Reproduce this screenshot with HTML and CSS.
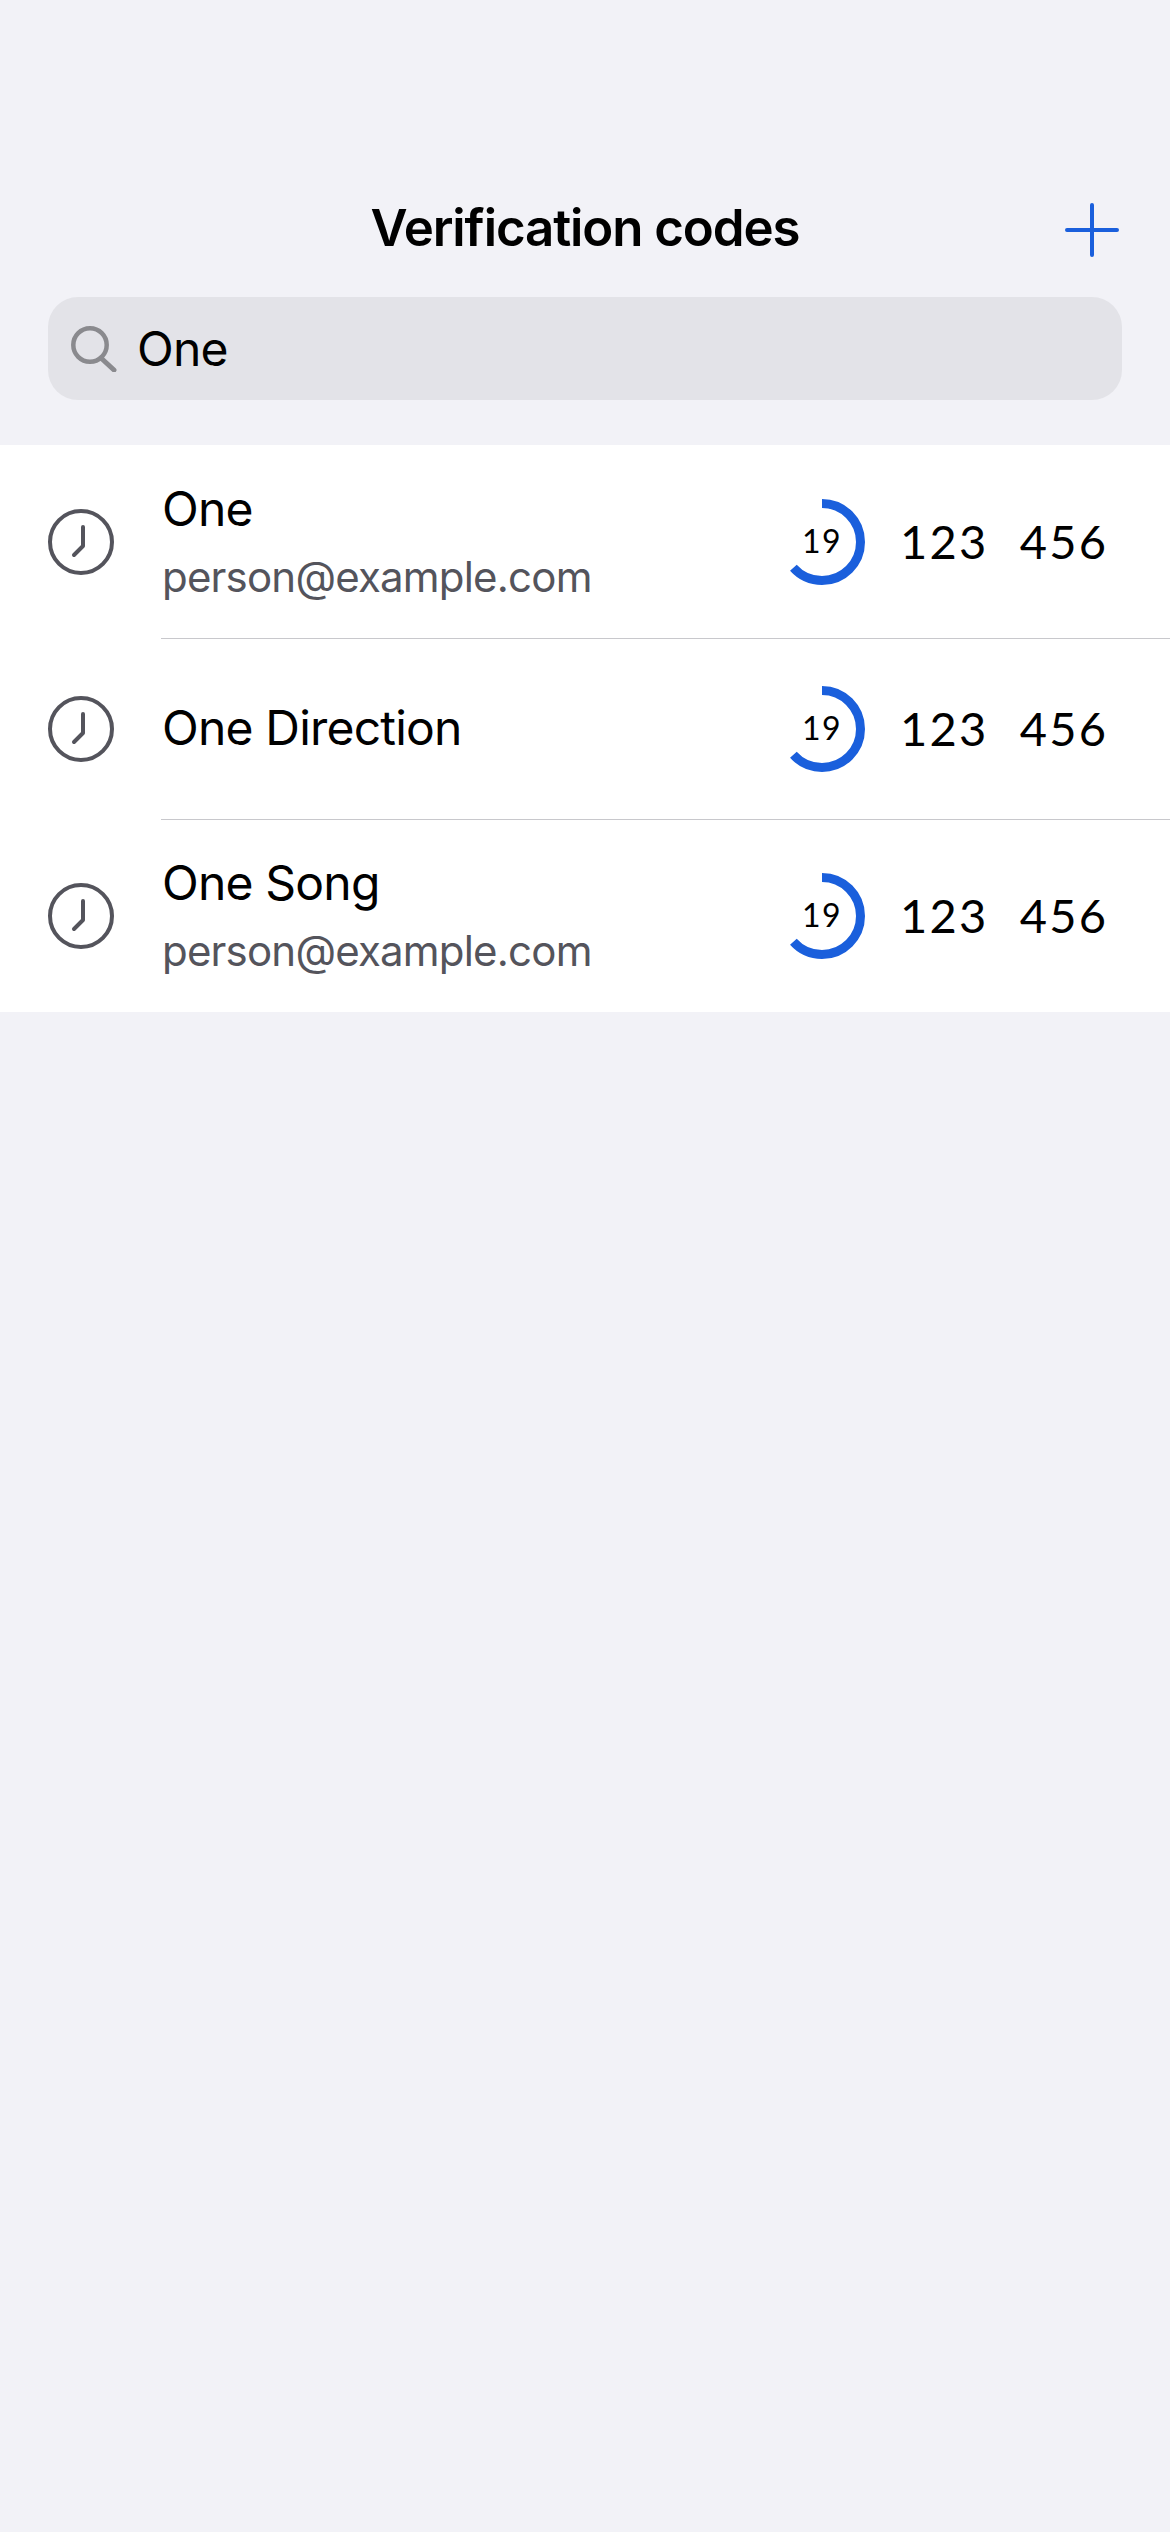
FILE: index.html
```html
<!DOCTYPE html>
<html lang="en">
<head>
  <meta charset="UTF-8">
  <meta name="viewport" content="width=device-width, initial-scale=1.0">
  <title>Verification codes</title>
  <link rel="stylesheet" href="styles.css">
</head>
<body>
  <header class="header">
    <h1 class="title">Verification codes</h1>
    <button class="add-btn" aria-label="Add">
      <svg width="54" height="54" viewBox="0 0 54 54"><path d="M27 2v50M2 27h50" fill="none" stroke="#1a5fdc" stroke-width="4" stroke-linecap="round"/></svg>
    </button>
  </header>

  <div class="search">
    <svg class="search-icon" width="46" height="46" viewBox="0 0 46 46"><circle cx="19" cy="19" r="16.7" fill="none" stroke="#8a8a8e" stroke-width="4.5"/><path d="M30 32l13 12" fill="none" stroke="#8a8a8e" stroke-width="5" stroke-linecap="round"/></svg>
    <span class="search-text">One</span>
  </div>

  <ul class="list">
    <li class="row">
      <svg class="clock" width="68" height="68" viewBox="0 0 68 68"><circle cx="34" cy="34" r="31" fill="none" stroke="#54545c" stroke-width="4"/><path d="M36 19v19l-9 9" fill="none" stroke="#54545c" stroke-width="4" stroke-linecap="round" stroke-linejoin="round"/></svg>
      <div class="info">
        <div class="name">One</div>
        <div class="account">person@example.com</div>
      </div>
      <div class="timer">
        <svg width="90" height="90" viewBox="0 0 90 90"><circle class="timer-arc" cx="45" cy="45" r="38.5" pathLength="30"/></svg>
        <span class="timer-num">19</span>
      </div>
      <div class="code"><span>123</span><span>456</span></div>
    </li>
    <li class="row">
      <svg class="clock" width="68" height="68" viewBox="0 0 68 68"><circle cx="34" cy="34" r="31" fill="none" stroke="#54545c" stroke-width="4"/><path d="M36 19v19l-9 9" fill="none" stroke="#54545c" stroke-width="4" stroke-linecap="round" stroke-linejoin="round"/></svg>
      <div class="info">
        <div class="name">One Direction</div>
      </div>
      <div class="timer">
        <svg width="90" height="90" viewBox="0 0 90 90"><circle class="timer-arc" cx="45" cy="45" r="38.5" pathLength="30"/></svg>
        <span class="timer-num">19</span>
      </div>
      <div class="code"><span>123</span><span>456</span></div>
    </li>
    <li class="row">
      <svg class="clock" width="68" height="68" viewBox="0 0 68 68"><circle cx="34" cy="34" r="31" fill="none" stroke="#54545c" stroke-width="4"/><path d="M36 19v19l-9 9" fill="none" stroke="#54545c" stroke-width="4" stroke-linecap="round" stroke-linejoin="round"/></svg>
      <div class="info">
        <div class="name">One Song</div>
        <div class="account">person@example.com</div>
      </div>
      <div class="timer">
        <svg width="90" height="90" viewBox="0 0 90 90"><circle class="timer-arc" cx="45" cy="45" r="38.5" pathLength="30"/></svg>
        <span class="timer-num">19</span>
      </div>
      <div class="code"><span>123</span><span>456</span></div>
    </li>
  </ul>
</body>
</html>
```

FILE: styles.css
```css
* {
  box-sizing: border-box;
  margin: 0;
  padding: 0;
}

html, body {
  height: 100%;
}

body {
  width: 1170px;
  min-height: 2532px;
  background: #f2f2f7;
  font-family: Inter, 'Liberation Sans', sans-serif;
  color: #000000;
  overflow: hidden;
}

/* Header */
.header {
  position: relative;
  height: 297px;
  padding-top: 190px;
  text-align: center;
}

.title {
  font-size: 51px;
  line-height: 76px;
  font-weight: 600;
  letter-spacing: -1.1px;
}

.add-btn {
  position: absolute;
  top: 203px;
  right: 51px;
  width: 54px;
  height: 54px;
  border: none;
  background: none;
}

/* Search */
.search {
  display: flex;
  align-items: center;
  gap: 20px;
  height: 103px;
  margin: 0 48px 45px 48px;
  padding-left: 23px;
  background: #e3e3e8;
  border-radius: 30px;
}

.search-icon {
  flex-shrink: 0;
}

.search-text {
  font-size: 48px;
  letter-spacing: -0.8px;
}

/* List */
.list {
  list-style: none;
  background: #ffffff;
}

.row {
  display: flex;
  align-items: center;
  height: 181px;
  padding-left: 47px;
  position: relative;
}

.row:first-child {
  height: 193px;
}

.row:last-child {
  height: 193px;
}

.row + .row::before {
  content: '';
  position: absolute;
  top: 0;
  left: 161px;
  right: 0;
  height: 1px;
  background: #c8c8cc;
}

.clock {
  flex-shrink: 0;
}

.info {
  flex: 1;
  margin-left: 47px;
  padding-bottom: 1px;
  display: flex;
  flex-direction: column;
  gap: 14px;
}

.name {
  font-size: 48px;
  line-height: 58px;
  letter-spacing: -0.8px;
}

.account {
  font-size: 42px;
  line-height: 50px;
  letter-spacing: -0.8px;
  color: #54545c;
}

/* Timer */
.timer {
  position: relative;
  width: 90px;
  height: 90px;
  flex-shrink: 0;
}

.timer svg {
  display: block;
  transform: rotate(-90deg);
}

.timer-arc {
  fill: none;
  stroke: #1a5fdc;
  stroke-width: 9;
  stroke-dasharray: 19 30;
}

.timer-num {
  position: absolute;
  top: 0;
  left: 0;
  width: 90px;
  line-height: 88px;
  text-align: center;
  font-family: Lato, sans-serif;
  font-size: 32px;
  letter-spacing: 1.5px;
}

/* Code */
.code {
  display: flex;
  gap: 31px;
  width: 303px;
  padding-left: 33px;
  padding-bottom: 2px;
  font-family: Lato, sans-serif;
  font-size: 47px;
  letter-spacing: 2.3px;
  flex-shrink: 0;
}
```
